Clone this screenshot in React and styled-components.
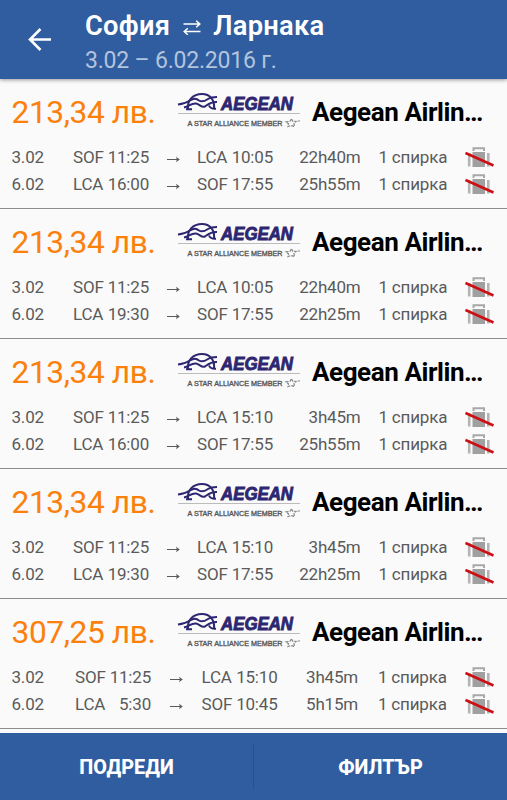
import React from 'react';
import styled, { createGlobalStyle } from 'styled-components';

const GlobalStyle = createGlobalStyle`
  * { box-sizing: border-box; }
  body {
    margin: 0;
    background: #fafafa;
    font-family: Roboto, "Liberation Sans", sans-serif;
  }
`;

const Screen = styled.div`
  width: 507px;
  height: 800px;
  display: flex;
  flex-direction: column;
  overflow: hidden;
  background: #fafafa;
`;

/* Header */
const Header = styled.header`
  flex: none;
  height: 79px;
  padding-left: 28px;
  display: flex;
  background: #2f5d9f;
  box-shadow: 0 1px 4px rgba(0, 0, 0, 0.4);
  z-index: 1;
`;

const BackButton = styled.button`
  width: 57px;
  padding: 0;
  border: 0;
  background: none;
  text-align: left;

  svg { display: block; }
`;

const Route = styled.h1`
  margin: 10px 0 0;
  height: 33px;
  display: flex;
  align-items: center;
  font-size: 27.3px;
  font-weight: 600;
  line-height: 33px;
  letter-spacing: 0.25px;
  white-space: nowrap;
  color: #fff;

  svg { margin: 0 12px 0 13px; }
`;

const Dates = styled.div`
  margin-top: 3px;
  font-size: 23px;
  line-height: 29px;
  letter-spacing: -0.2px;
  white-space: nowrap;
  color: #b3c4de;
`;

/* Flight list */
const List = styled.main`
  flex: none;
  height: 653.5px;
  overflow: hidden;
`;

const Card = styled.article`
  height: 130px;
  padding: 12px 11.5px 0;
  border-bottom: 1px solid #8d8d8d;
`;

const CardHead = styled.div`
  height: 53px;
  display: flex;
`;

const Price = styled.div`
  width: 164.5px;
  font-size: 31.7px;
  line-height: 43px;
  letter-spacing: -0.4px;
  white-space: nowrap;
  color: #fb800c;
`;

const LogoBox = styled.div`
  width: 136px;
  height: 44px;

  svg { display: block; }
`;

const Airline = styled.div`
  font-size: 26px;
  font-weight: 700;
  line-height: 42px;
  letter-spacing: -0.42px;
  white-space: nowrap;
  color: #000;
`;

const Leg = styled.div`
  height: 26.7px;
  display: grid;
  grid-template-columns: ${({ $wide }) => ($wide
    ? '63.5px 76px 50.5px 76px 80.5px 20px 87px 30px'
    : '61.5px 76px 48px 76px 87.5px 18px 86.5px 30px')};
  align-items: center;
  font-size: 17px;
  line-height: 26px;
  letter-spacing: -0.2px;
  white-space: nowrap;
  color: #5a5a5a;
`;

const Stop = styled.div`
  display: flex;
  justify-content: space-between;
`;

const ArrowCell = styled.div`
  display: flex;
  justify-content: center;
  padding-top: 5px;
`;

const Duration = styled.div`
  text-align: right;
`;

/* Bottom bar */
const Footer = styled.footer`
  flex: 1;
  display: flex;
  align-items: center;
  background: #2f5d9f;
`;

const FooterButton = styled.button`
  flex: 1;
  height: 46px;
  padding: 2px 0 0;
  border: 0;
  border-left: ${({ $divided }) => ($divided ? '1px solid #26518c' : '0')};
  background: none;
  font-family: inherit;
  font-size: 19.8px;
  font-weight: 800;
  color: #fff;
`;

const BackIcon = () => (
  <svg width="24" height="79" viewBox="0 0 24 79" fill="none" stroke="#fff" strokeWidth="2.6">
    <path d="M23 39.5H2.5M12.5 29L2 39.5L12.5 50" />
  </svg>
);

const SwapIcon = () => (
  <svg width="18" height="17" viewBox="0 0 18 17" fill="none" stroke="#fff" strokeWidth="1.5">
    <path d="M0.5 6H16.5M13.2 2.8L16.8 6L13.2 9.2M17.5 13.5H1.5M4.8 10.3L1.2 13.5L4.8 16.7" />
  </svg>
);

const ArrowIcon = () => (
  <svg width="13" height="7" viewBox="0 0 13 7">
    <path d="M0 3.5H11" stroke="#5a5a5a" strokeWidth="1" />
    <path d="M9 0.8L12.8 3.5L9 6.2L9.9 3.5Z" fill="#5a5a5a" />
  </svg>
);

const NoBagIcon = () => (
  <svg width="30" height="24" viewBox="0 0 30 24">
    <path d="M8.5 6V3.2H19V6" fill="none" stroke="#a8a8a8" strokeWidth="2" />
    <path d="M7.5 7H20V22H7.5Z" fill="#a0a0a0" />
    <path d="M4.2 8V21.5M23.3 8V21.5" stroke="#b4b4b4" strokeWidth="2.6" />
    <path d="M0.5 8L28.5 20.5" stroke="#cc0f14" strokeWidth="2.6" />
  </svg>
);

const AegeanLogo = () => (
  <svg width="126" height="44" viewBox="0 0 126 44">
    <g fill="none" stroke="#2d2670" strokeWidth="2">
      <path d="M12 18.5C11 9 17 3 26 3C34 3 39 9 38 18" />
      <path d="M2 13.5C8 13 11 11.5 14 9.5C18 7 20 7 23 9.5C26 11.5 29 10 32 8C35 6 38 6 41 6" />
      <path d="M8 16.5C13 15.5 15 12 20 12.5C24 13 25 17 29 15.5C32 13.5 35 10.5 41 11" />
      <path d="M10 18.3H16M33 14.5C34 17 36 18 40 17.8" />
    </g>
    <text
      x="45"
      y="19"
      textLength="72"
      lengthAdjust="spacingAndGlyphs"
      fontFamily="Liberation Sans, sans-serif"
      fontSize="17.6"
      fontWeight="700"
      fontStyle="italic"
      fill="#2d2670"
      stroke="#2d2670"
      strokeWidth="0.9"
    >
      AEGEAN
    </text>
    <path d="M2 22.5H124" stroke="#bcbcbc" strokeWidth="1.2" />
    <text
      x="11.5"
      y="34.5"
      textLength="95"
      lengthAdjust="spacingAndGlyphs"
      fontFamily="Liberation Sans, sans-serif"
      fontSize="6.4"
      fill="#555"
      stroke="#555"
      strokeWidth="0.3"
    >
      A STAR ALLIANCE MEMBER
    </text>
    <path
      d="M115.5 28L117 30.3L120 30.5L118 32.5L118.5 35.5L115 34.5L112 35.5L112.5 32.7L110 30.8L114 30.3Z"
      fill="none"
      stroke="#858585"
      strokeWidth="1.2"
      strokeDasharray="3 1"
    />
    <path d="M121.5 30H124" stroke="#888" />
  </svg>
);

const flights = [
  {
    price: '213,34 лв.',
    legs: [
      ['3.02', 'SOF', '11:25', 'LCA', '10:05', '22h40m'],
      ['6.02', 'LCA', '16:00', 'SOF', '17:55', '25h55m'],
    ],
  },
  {
    price: '213,34 лв.',
    legs: [
      ['3.02', 'SOF', '11:25', 'LCA', '10:05', '22h40m'],
      ['6.02', 'LCA', '19:30', 'SOF', '17:55', '22h25m'],
    ],
  },
  {
    price: '213,34 лв.',
    legs: [
      ['3.02', 'SOF', '11:25', 'LCA', '15:10', '3h45m'],
      ['6.02', 'LCA', '16:00', 'SOF', '17:55', '25h55m'],
    ],
  },
  {
    price: '213,34 лв.',
    legs: [
      ['3.02', 'SOF', '11:25', 'LCA', '15:10', '3h45m'],
      ['6.02', 'LCA', '19:30', 'SOF', '17:55', '22h25m'],
    ],
  },
  {
    price: '307,25 лв.',
    wide: true,
    legs: [
      ['3.02', 'SOF', '11:25', 'LCA', '15:10', '3h45m'],
      ['6.02', 'LCA', '5:30', 'SOF', '10:45', '5h15m'],
    ],
  },
];

const Flight = ({ price, legs, wide }) => (
  <Card>
    <CardHead>
      <Price>{price}</Price>
      <LogoBox><AegeanLogo /></LogoBox>
      <Airline>Aegean Airlin…</Airline>
    </CardHead>
    {legs.map(([date, from, departure, to, arrival, duration]) => (
      <Leg key={date} $wide={wide}>
        <div>{date}</div>
        <Stop><span>{from}</span><span>{departure}</span></Stop>
        <ArrowCell><ArrowIcon /></ArrowCell>
        <Stop><span>{to}</span><span>{arrival}</span></Stop>
        <Duration>{duration}</Duration>
        <div />
        <div>1 спирка</div>
        <NoBagIcon />
      </Leg>
    ))}
  </Card>
);

const App = () => {
  return (
    <Screen>
      <GlobalStyle />
      <Header>
        <BackButton aria-label="Назад"><BackIcon /></BackButton>
        <div>
          <Route>София<SwapIcon />Ларнака</Route>
          <Dates>3.02 – 6.02.2016 г.</Dates>
        </div>
      </Header>
      <List>
        {flights.map((flight, index) => <Flight key={index} {...flight} />)}
      </List>
      <Footer>
        <FooterButton>ПОДРЕДИ</FooterButton>
        <FooterButton $divided>ФИЛТЪР</FooterButton>
      </Footer>
    </Screen>
  );
};

export default App;
